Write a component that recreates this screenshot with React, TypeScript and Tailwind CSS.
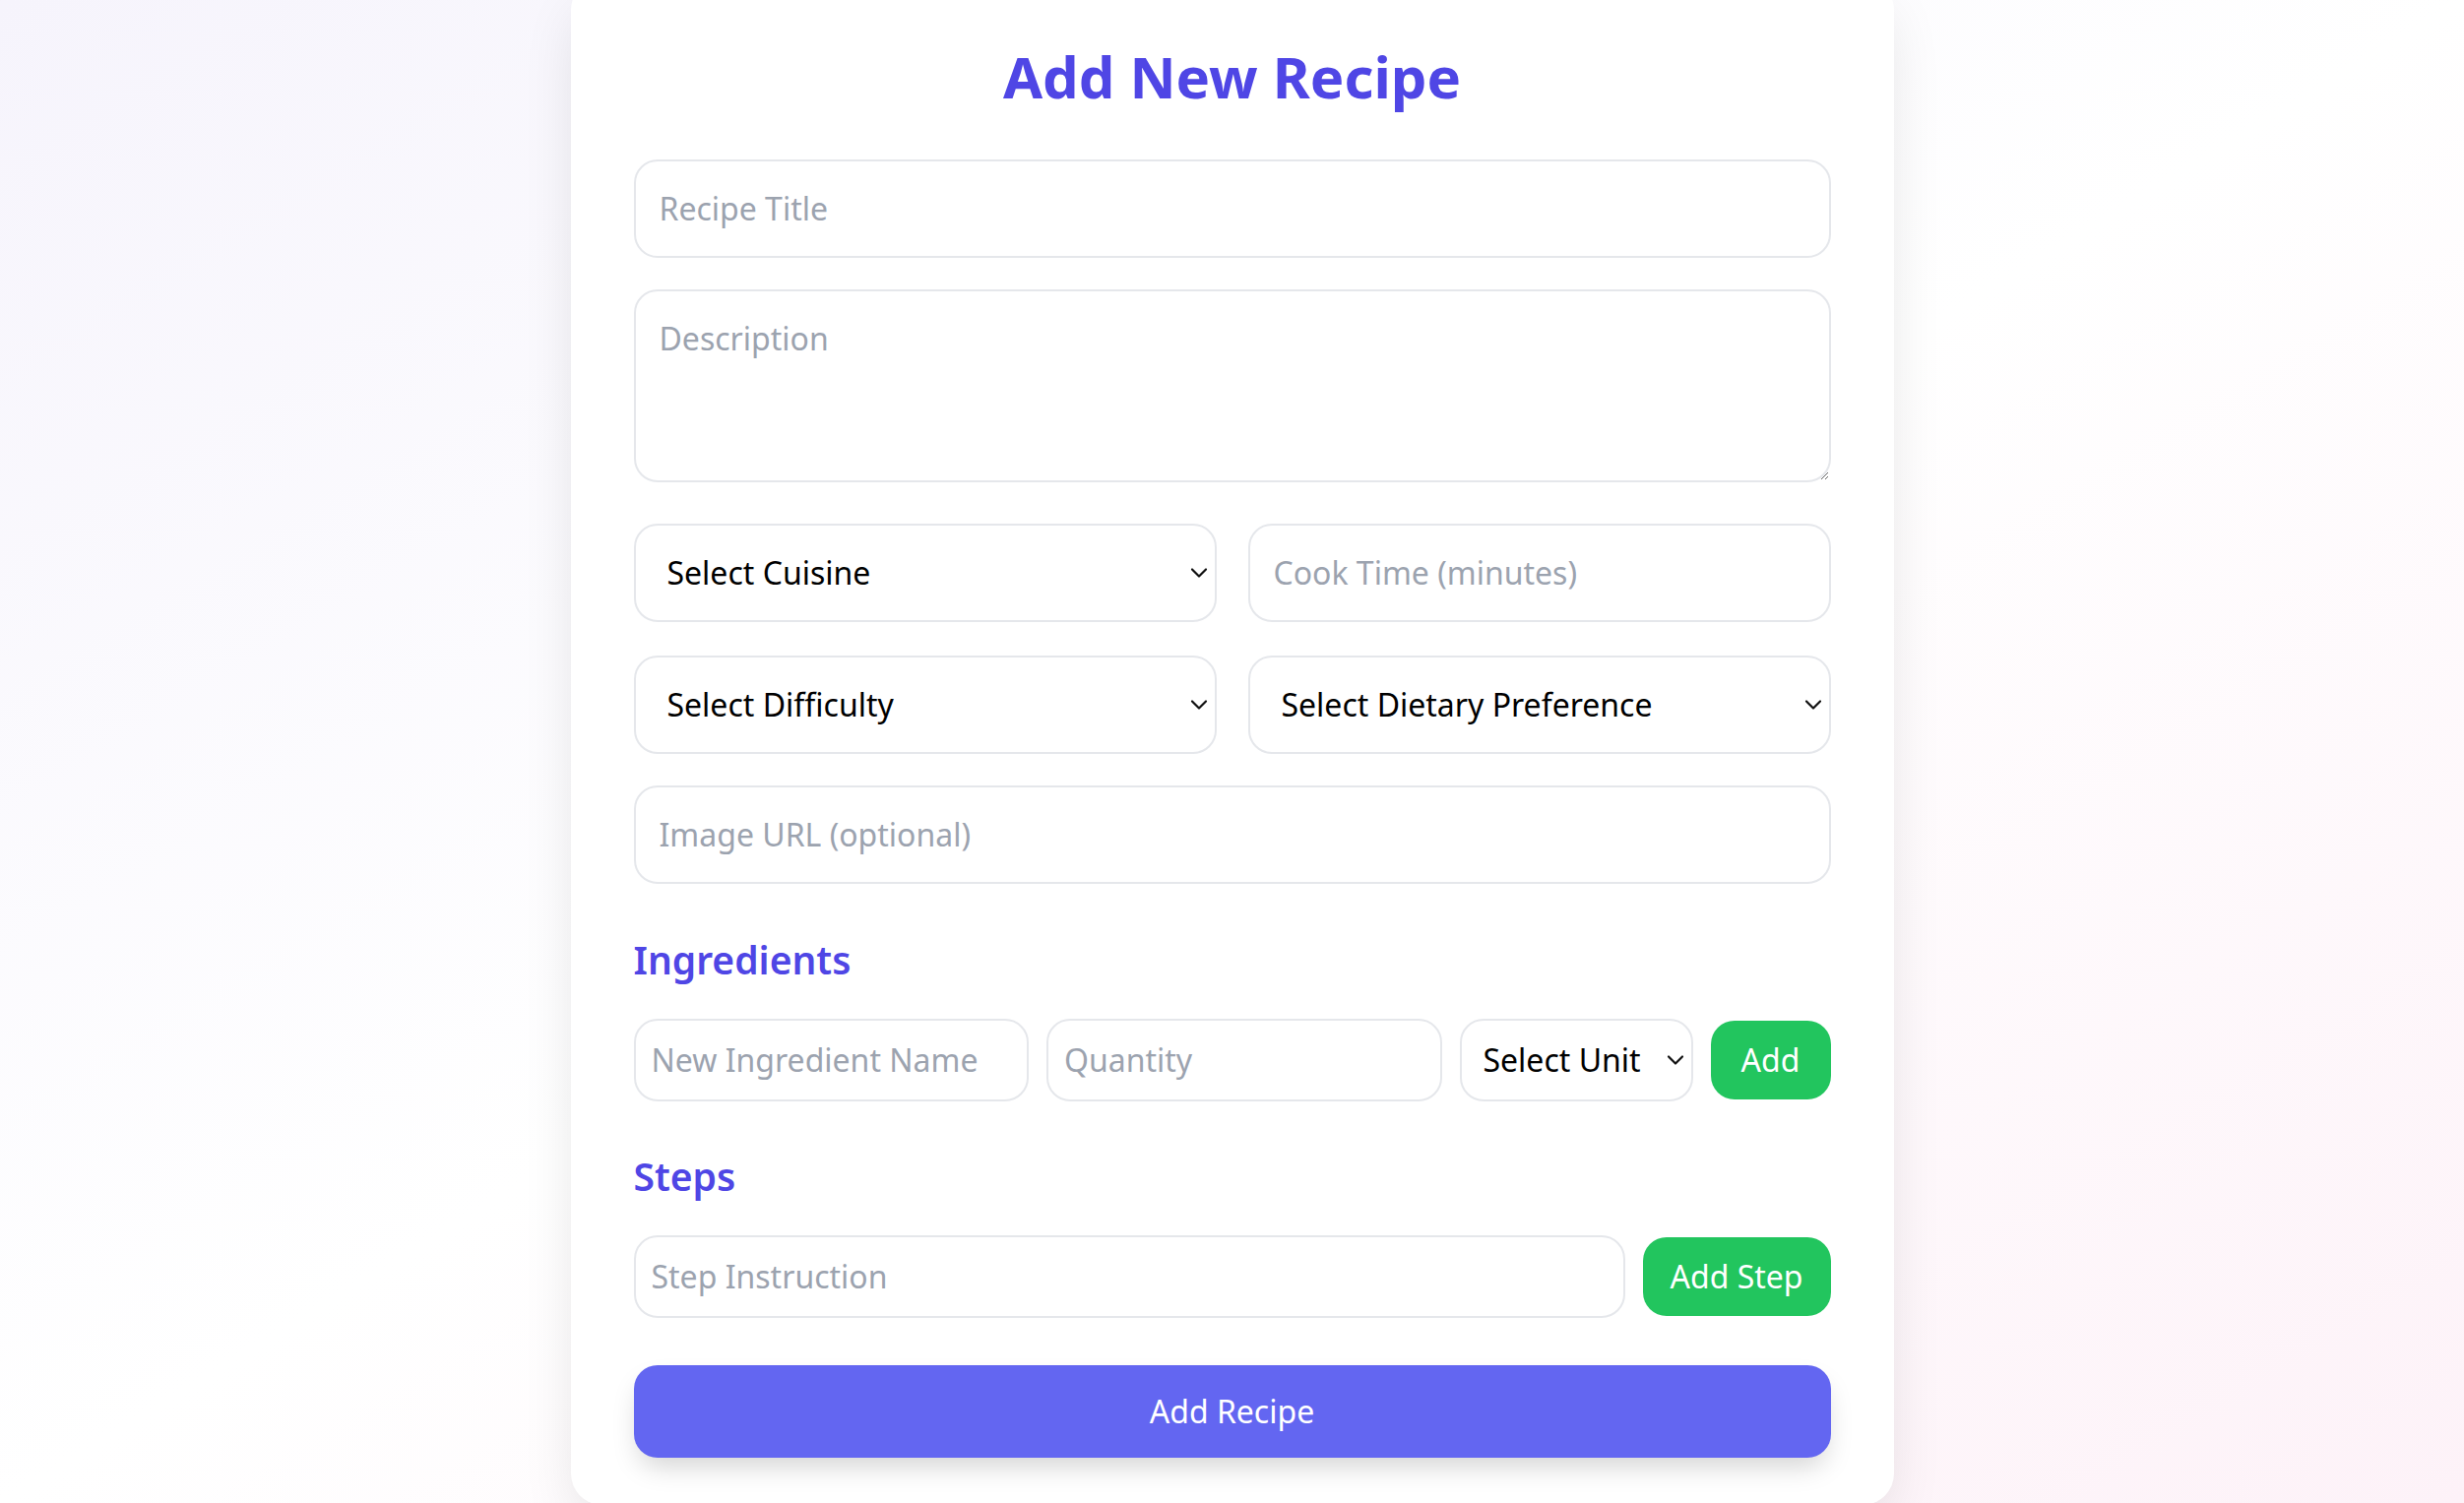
import React from "react";

const font = "font-['Segoe_UI','Noto_Sans',sans-serif]";

const field =
  "w-full rounded-[24px] border-2 border-[#e5e7eb] bg-white text-[32px] leading-[48px] text-black placeholder:text-[#9ca3af] outline-none";

function Chevron() {
  return (
    <svg
      className="pointer-events-none absolute right-[9px] top-1/2 -translate-y-1/2"
      width="18"
      height="12"
      viewBox="0 0 18 12"
      fill="none"
    >
      <path d="M2 2.5 L9 9.5 L16 2.5" stroke="#111" strokeWidth="2.2" strokeLinecap="round" strokeLinejoin="round" />
    </svg>
  );
}

function Select({ label, className = "" }: { label: string; className?: string }) {
  return (
    <div className={`relative ${className}`}>
      <select className={`${field} appearance-none py-[24px] pl-[32px] pr-[40px]`} defaultValue="">
        <option value="">{label}</option>
      </select>
      <Chevron />
    </div>
  );
}

export default function App() {
  return (
    <div
      className={`${font} flex h-screen justify-center overflow-hidden bg-gradient-to-br from-[#f6f4fc] via-white to-[#fdf2f8]`}
    >
      <div className="-mt-[22px] w-[1344px] self-start rounded-[32px] bg-white px-[64px] pt-[64px] pb-[48px] shadow-[0_25px_60px_-10px_rgba(0,0,0,0.12)]">
        <h1 className="mb-[48px] text-center text-[58px] font-bold leading-[72px] text-[#4f46e5]">Add New Recipe</h1>

        <input className={`${field} mb-[32px] block p-[24px]`} placeholder="Recipe Title" />
        <textarea className={`${field} mb-[42px] block h-[196px] p-[24px]`} placeholder="Description" />

        <div className="mb-[32px] grid grid-cols-2 gap-x-[32px] gap-y-[34px]">
          <Select label="Select Cuisine" />
          <input className={`${field} p-[24px]`} placeholder="Cook Time (minutes)" />
          <Select label="Select Difficulty" />
          <Select label="Select Dietary Preference" />
        </div>

        <input className={`${field} block p-[24px]`} placeholder="Image URL (optional)" />

        <h2 className="mt-[49px] mb-[32px] text-[39px] font-semibold leading-[56px] text-[#4f46e5]">Ingredients</h2>
        <div className="flex items-center gap-[18px]">
          <input className={`${field} min-w-0 flex-1 p-[16px]`} placeholder="New Ingredient Name" />
          <input className={`${field} min-w-0 flex-1 p-[16px]`} placeholder="Quantity" />
          <div className="relative w-[237px] shrink-0">
            <select className={`${field} appearance-none py-[16px] pl-[22px] pr-[36px]`} defaultValue="">
              <option value="">Select Unit</option>
            </select>
            <Chevron />
          </div>
          <button className="h-[80px] w-[122px] shrink-0 rounded-[24px] bg-[#22c55e] text-[32px] text-white">Add</button>
        </div>

        <h2 className="mt-[48px] mb-[32px] text-[39px] font-semibold leading-[56px] text-[#4f46e5]">Steps</h2>
        <div className="flex items-center gap-[18px]">
          <input className={`${field} min-w-0 flex-1 p-[16px]`} placeholder="Step Instruction" />
          <button className="h-[80px] w-[191px] shrink-0 rounded-[24px] bg-[#22c55e] text-[32px] text-white">Add Step</button>
        </div>

        <button className="mt-[48px] block h-[94px] w-full rounded-[24px] bg-[#6366f1] text-[32px] text-white shadow-[0_14px_28px_-6px_rgba(0,0,0,0.18)]">
          Add Recipe
        </button>
      </div>
    </div>
  );
}
